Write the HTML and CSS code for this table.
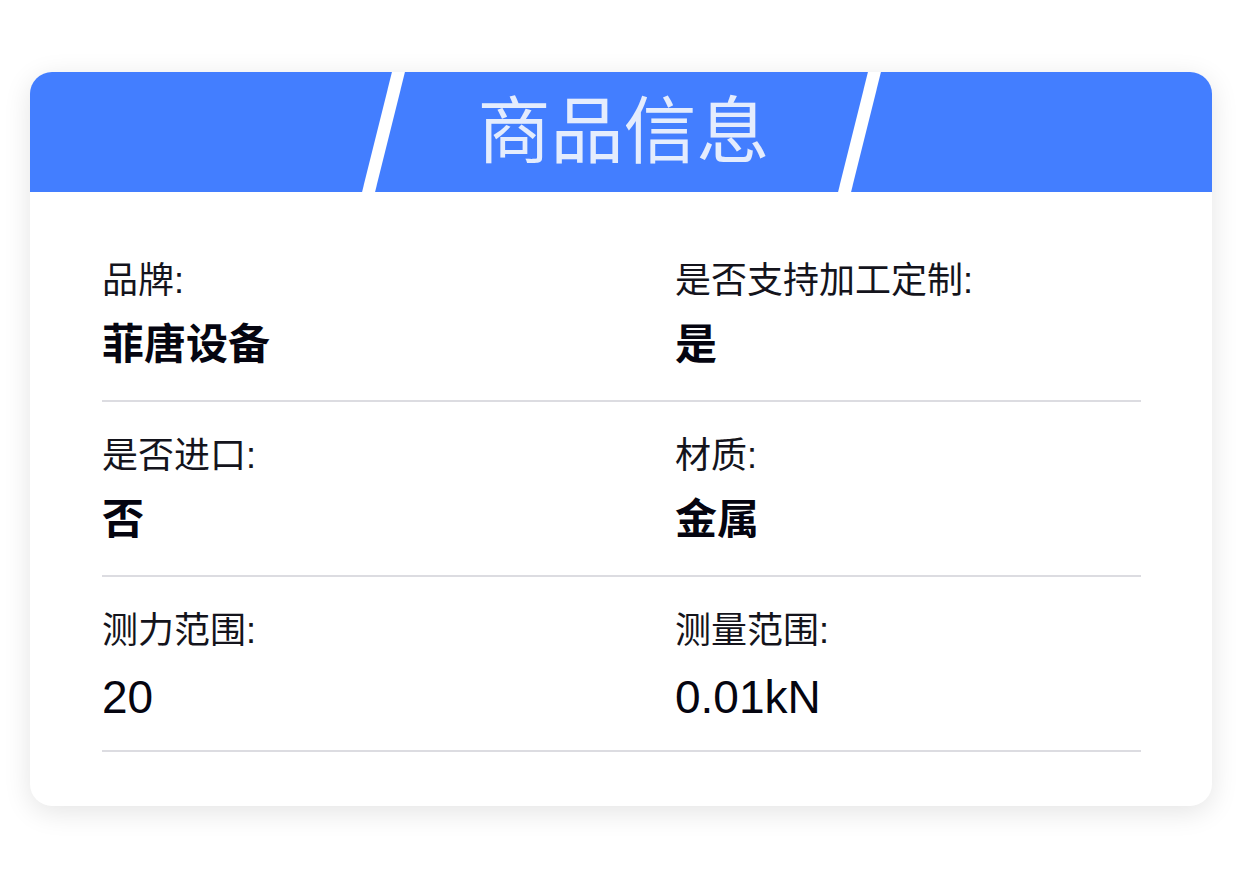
FILE: index.html
```html
<!DOCTYPE html>
<html lang="zh-CN">
<head>
<meta charset="utf-8">
<title>商品信息</title>
<link rel="stylesheet" href="styles.css">
</head>
<body>
<div class="card">
  <div class="card-head">
    <div class="band"><h1 class="title">商品信息</h1></div>
  </div>
  <div class="card-body">
    <div class="row">
      <div class="item"><div class="label">品牌:</div><div class="value">菲唐设备</div></div>
      <div class="item"><div class="label">是否支持加工定制:</div><div class="value">是</div></div>
    </div>
    <div class="row">
      <div class="item"><div class="label">是否进口:</div><div class="value">否</div></div>
      <div class="item"><div class="label">材质:</div><div class="value">金属</div></div>
    </div>
    <div class="row">
      <div class="item"><div class="label">测力范围:</div><div class="value num">20</div></div>
      <div class="item"><div class="label">测量范围:</div><div class="value num">0.01kN</div></div>
    </div>
  </div>
</div>
</body>
</html>
```

FILE: styles.css
```css
html, body {
  margin: 0;
  padding: 0;
  background: #ffffff;
}
body {
  font-family: "Liberation Sans", "Noto Sans CJK SC", sans-serif;
  padding: 72px 30px;
}
.card {
  background: #ffffff;
  border-radius: 22px;
  box-shadow: 0 6px 28px rgba(0, 0, 0, 0.11);
  overflow: hidden;
  padding-bottom: 54px;
}
.card-head {
  height: 120px;
  background: #437eff;
  display: flex;
  justify-content: center;
  overflow: hidden;
}
.band {
  width: 463px;
  height: 120px;
  border-left: 13px solid #ffffff;
  border-right: 13px solid #ffffff;
  transform: skewX(-14deg);
  display: flex;
  align-items: center;
  justify-content: center;
}
.title {
  margin: 0;
  transform: skewX(14deg);
  font-family: "Noto Sans CJK SC", sans-serif;
  font-weight: 400;
  font-size: 73px;
  line-height: 1;
  color: #e4ecfd;
  position: relative;
  top: -7px;
}
.card-body {
  padding: 35px 71px 0 72px;
}
.row {
  display: grid;
  grid-template-columns: 573px 1fr;
  padding: 32px 0 29px;
  border-bottom: 2px solid #dcdce1;
}
.label {
  font-size: 36px;
  line-height: 44px;
  color: #14141c;
}
.value {
  margin-top: 16px;
  font-size: 42px;
  line-height: 52px;
  font-weight: 700;
  color: #050510;
}
.value.num {
  font-weight: 400;
  font-size: 46px;
  padding-top: 4px;
  line-height: 48px;
}
```
